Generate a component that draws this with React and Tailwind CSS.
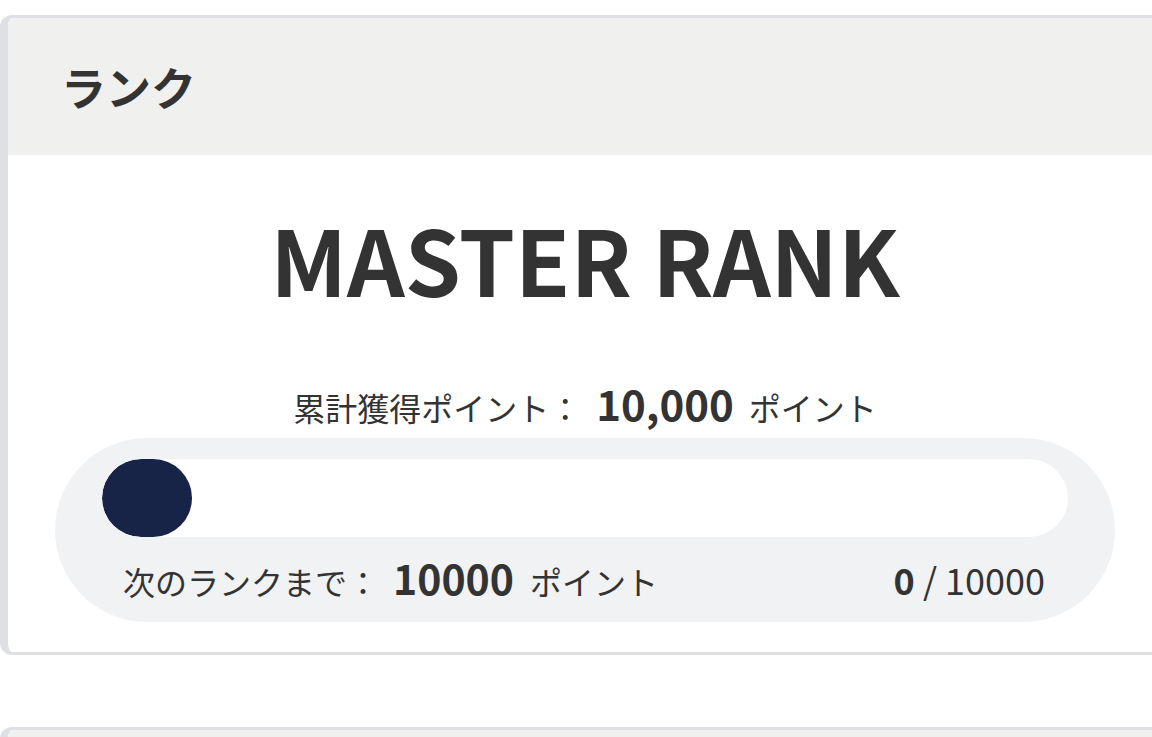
import React from 'react';

const font = { fontFamily: '"Noto Sans CJK JP", "Noto Sans", sans-serif' };

const RankCard = ({ rank, total, remaining, current, goal }) => {
  const percent = Math.min(100, (current / goal) * 100);

  return (
    <div className="mt-[15px] w-[1165px] bg-white border-t-[3px] border-b-[3px] border-l-[8px] border-r-[3px] border-[#dfe0e3] rounded-l-[12px] overflow-hidden">
      {/* ヘッダー */}
      <div className="h-[137px] bg-[#f0f0ef] flex items-center pl-[53px]">
        <h2 className="text-[45px] leading-none font-bold text-[#333]">ランク</h2>
      </div>

      {/* 本文 */}
      <div className="pt-[58px] pb-[30px]">
        <div className="text-center text-[90px] leading-none font-bold text-[#333]">{rank}</div>

        <div className="mt-[79px] flex items-baseline justify-center text-[#333] leading-none">
          <span className="text-[32px]">累計獲得ポイント：</span>
          <span className="text-[42px] font-bold ml-[15px] mr-[15px]">{total}</span>
          <span className="text-[32px]">ポイント</span>
        </div>

        {/* プログレス */}
        <div className="mx-[47px] mt-[14px] bg-[#f1f2f4] rounded-full px-[47px] pt-[21px] pb-[24px]">
          <div className="h-[78px] bg-white rounded-full overflow-hidden">
            <div
              className="h-full bg-[#172447] rounded-full min-w-[90px]"
              style={{ width: `${percent}%` }}
            />
          </div>
          <div className="mt-[20px] pl-[21px] pr-[23px] flex items-baseline justify-between text-[#333] leading-none">
            <div className="flex items-baseline">
              <span className="text-[32px]">次のランクまで：</span>
              <span className="text-[41px] font-bold ml-[14px] mr-[16px]">{remaining}</span>
              <span className="text-[32px]">ポイント</span>
            </div>
            <div className="text-[36px]">
              <span className="font-bold">{current}</span> / {goal}
            </div>
          </div>
        </div>
      </div>
    </div>
  );
};

const App = () => {
  return (
    <div className="min-h-screen w-full bg-white overflow-hidden" style={font}>
      <RankCard rank="MASTER RANK" total="10,000" remaining="10000" current={0} goal={10000} />

      {/* 次のカード */}
      <div className="mt-[72px] w-[1165px] bg-white border-t-[3px] border-l-[8px] border-[#dfe0e3] rounded-tl-[12px] overflow-hidden">
        <div className="h-[137px] bg-[#f0f0ef]" />
      </div>
    </div>
  );
};

export default App;
